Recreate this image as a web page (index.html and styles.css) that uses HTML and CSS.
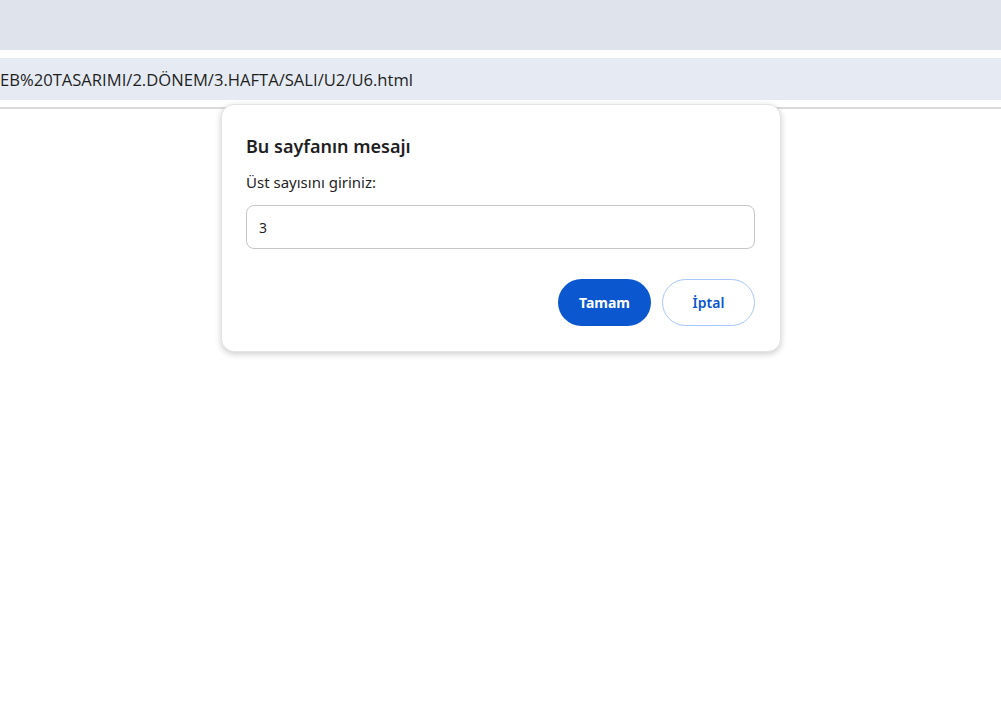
FILE: index.html
```html
<!DOCTYPE html>
<html lang="tr">
<head>
<meta charset="utf-8">
<link rel="stylesheet" href="styles.css">
</head>
<body>
<div class="tabbar"></div>
<div class="gap1"></div>
<div class="addressbar"><span class="url">EB%20TASARIMI/2.DÖNEM/3.HAFTA/SALI/U2/U6.html</span></div>
<div class="gap2"></div>
<div class="page">
  <div class="dialog">
    <div class="title">Bu sayfanın mesajı</div>
    <div class="label">Üst sayısını giriniz:</div>
    <div class="input">3</div>
    <div class="buttons">
      <button class="btn primary">Tamam</button>
      <button class="btn secondary">İptal</button>
    </div>
  </div>
</div>
</body>
</html>
```
FILE: styles.css
```css
html, body {
  margin: 0;
  padding: 0;
  background: #ffffff;
  width: 1001px;
  height: 707px;
  overflow: hidden;
  font-family: "Noto Sans", "Open Sans", sans-serif;
}
.tabbar {
  height: 50px;
  background: #dfe3eb;
}
.gap1 {
  height: 8px;
}
.addressbar {
  height: 42px;
  background: #e6ebf3;
  display: flex;
  align-items: center;
  overflow: hidden;
}
.url {
  font-family: "Open Sans", "Noto Sans", sans-serif;
  font-size: 16.6px;
  color: #1f1f1f;
  white-space: nowrap;
}
.gap2 {
  height: 7px;
}
.page {
  border-top: 2px solid #dadada;
  position: relative;
}
.dialog {
  position: absolute;
  top: -5px;
  left: 221px;
  width: 560px;
  height: 248px;
  box-sizing: border-box;
  padding: 29px 25px 0 24px;
  background: #fff;
  border: 1px solid #e3e3e3;
  border-radius: 13px;
  box-shadow: 0 2px 6px rgba(0,0,0,0.2);
  display: flex;
  flex-direction: column;
}
.title {
  font-size: 18px;
  font-weight: 600;
  color: #1f1f1f;
  line-height: 24px;
}
.label {
  margin-top: 14px;
  font-size: 15px;
  color: #1f1f1f;
  line-height: 20px;
}
.input {
  margin-top: 13px;
  height: 44px;
  box-sizing: border-box;
  border: 1px solid #c4c7c5;
  border-radius: 8px;
  padding: 0 12px;
  display: flex;
  align-items: center;
  font-size: 14px;
  color: #1f1f1f;
}
.buttons {
  margin-top: 30px;
  display: flex;
  justify-content: flex-end;
  gap: 11px;
}
.btn {
  height: 47px;
  width: 93px;
  border-radius: 24px;
  font-family: "Noto Sans", sans-serif;
  font-size: 14px;
  font-weight: 700;
  cursor: pointer;
  box-sizing: border-box;
}
.primary {
  background: #0b57d0;
  border: none;
  color: #fff;
}
.secondary {
  background: #fff;
  border: 1px solid #a8c7fa;
  color: #0b57d0;
  font-weight: 600;
}
```
